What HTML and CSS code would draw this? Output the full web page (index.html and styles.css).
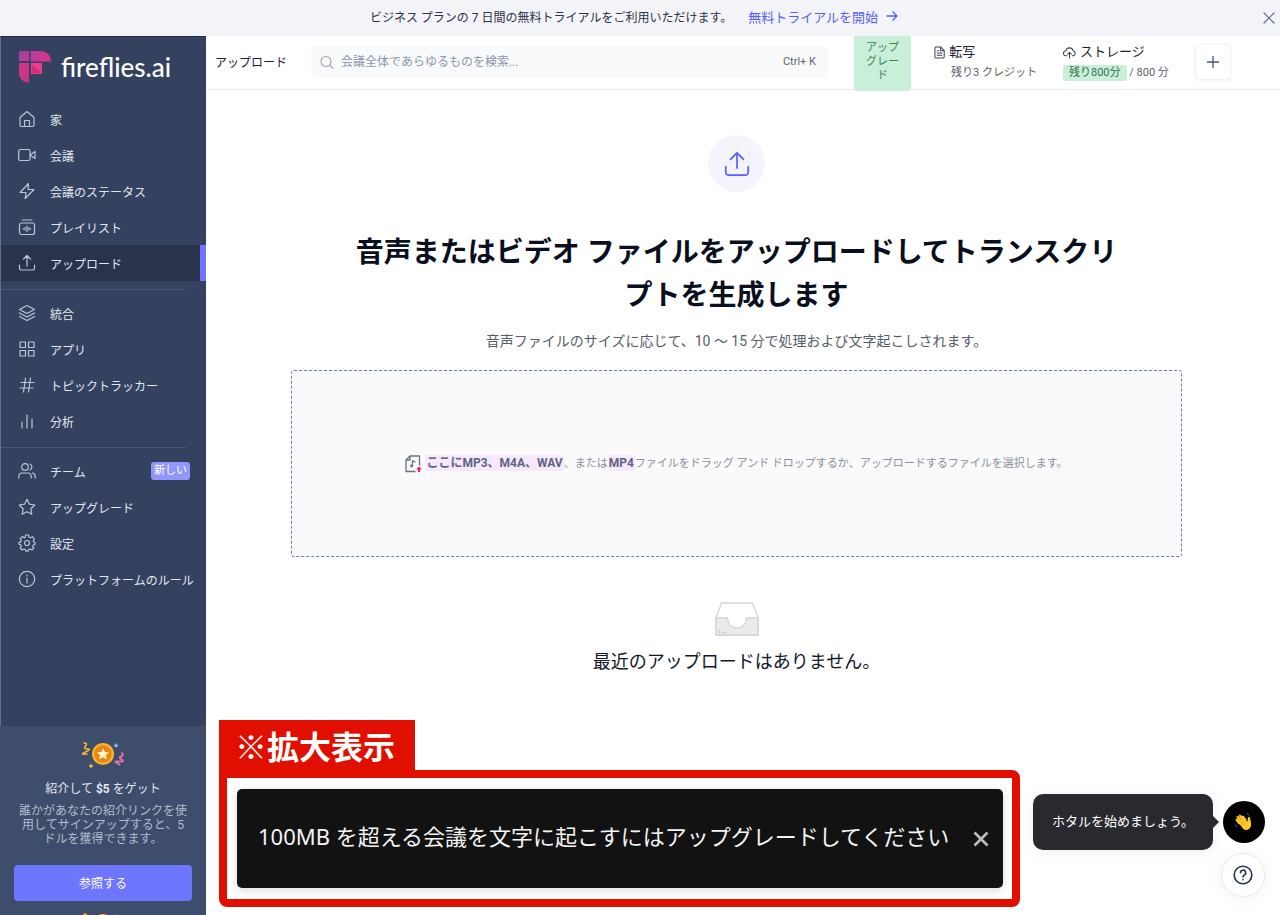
FILE: index.html
```html
<!DOCTYPE html>
<html lang="ja">
<head>
<meta charset="utf-8">
<meta name="viewport" content="width=device-width, initial-scale=1">
<title>アップロード - fireflies.ai</title>
<link rel="stylesheet" href="styles.css">
</head>
<body>
<div class="banner">
  <span>ビジネス プランの 7 日間の無料トライアルをご利用いただけます。</span>
  <a class="banner-link" href="#">無料トライアルを開始
    <svg class="banner-arrow" viewBox="0 0 12 12"><path d="M1 6h10M7 2l4 4-4 4"/></svg></a>
  <button class="banner-close" aria-label="閉じる"><svg viewBox="0 0 12 12"><path d="M1 1l10 10M11 1L1 11"/></svg></button>
</div>
<div class="app">
  <aside class="sidebar">
    <div class="nav-area">
      <a class="logo" href="#">
        <svg class="logo-mark" viewBox="0 0 32 32" aria-hidden="true">
          <defs>
            <linearGradient id="g" x1="0" y1="0" x2="1" y2="1"><stop offset="0" stop-color="#9b3fa8"/><stop offset=".5" stop-color="#b03c9c"/><stop offset="1" stop-color="#c8388f"/></linearGradient>
            <linearGradient id="h" x1="0" y1="0" x2="1" y2="0"><stop offset="0" stop-color="#b8409f"/><stop offset="1" stop-color="#dd2f86"/></linearGradient>
          </defs>
          <path fill="url(#g)" d="M0 0h10v10H0z"/>
          <path fill="url(#h)" d="M11.500 0H22a10 10 0 0 1 10 10v.5H11.500z"/>
          <path fill="#c93688" d="M0 12h10v20A10 10 0 0 1 0 22z"/>
          <path fill="#f03a8b" d="M12 12h11v11H12z"/>
          <path fill="#d32c78" d="M13 14l9 8h-9z"/>
        </svg>
        <span class="logo-text">fireflies.ai</span>
      </a>
      <nav>
        <ul class="nav-group">
          <li><a href="#"><svg viewBox="0 0 18 18"><path d="M2 7.500L9 1.500l7 6V15a1.500 1.500 0 0 1-1.500 1.500h-11A1.500 1.500 0 0 1 2 15zM6.500 16.500v-6h5v6"/></svg>家</a></li>
          <li><a href="#"><svg viewBox="0 0 18 18"><rect x=".7" y="3.500" width="11.300" height="11" rx="1.500"/><path d="M12 9l5-3.500v7z"/></svg>会議</a></li>
          <li><a href="#"><svg viewBox="0 0 18 18"><path d="M10.500 1.500L2 10.500h6l-.8 6L16 7.500h-6z"/></svg>会議のステータス</a></li>
          <li><a href="#"><svg viewBox="0 0 18 18"><rect x="1.500" y="5" width="15" height="11.500" rx="2"/><path d="M4 2h10M9 8v5.500M7 9.500v2.500M11 9.500v2.500M5.500 10.500v.5M12.500 10.500v.5"/></svg>プレイリスト</a></li>
          <li><a class="active" href="#" aria-current="page"><svg viewBox="0 0 18 18"><path d="M9 12V2M5.500 5L9 1.500 12.500 5M1.500 11v3.500a1.500 1.500 0 0 0 1.500 1.500h12a1.500 1.500 0 0 0 1.500-1.500V11"/></svg>アップロード</a></li>
        </ul>
        <ul class="nav-group">
          <li><a href="#"><svg viewBox="0 0 18 18"><path d="M9 1.500l7.500 4L9 9.500l-7.500-4zM1.500 9L9 13l7.500-4M1.500 12.500l7.500 4 7.500-4"/></svg>統合</a></li>
          <li><a href="#"><svg viewBox="0 0 18 18"><path d="M2 2h5.500v5.500H2zM10.500 2H16v5.500h-5.500zM2 10.500h5.500V16H2zM10.500 10.500H16V16h-5.500z"/></svg>アプリ</a></li>
          <li><a href="#"><svg viewBox="0 0 18 18"><path d="M3 6.500h13M2 12h13M7.500 2L5.500 16M12.500 2l-2 14"/></svg>トピックトラッカー</a></li>
          <li><a href="#"><svg viewBox="0 0 18 18"><path d="M4 10v6M9 3v13M14 7v9"/></svg>分析</a></li>
        </ul>
        <ul class="nav-group">
          <li><a href="#"><svg viewBox="0 0 18 18"><circle cx="7" cy="5" r="3.300"/><path d="M.8 16v-1.500A3.500 3.500 0 0 1 4.300 11h5.400a3.500 3.500 0 0 1 3.500 3.500V16M12 2a3.300 3.300 0 0 1 0 6M14.500 11a3.500 3.500 0 0 1 2.700 3.500V16"/></svg>チーム<span class="tag">新しい</span></a></li>
          <li><a href="#"><svg viewBox="0 0 18 18"><path d="M9 1.300l2.400 4.900 5.400.8-3.900 3.800.9 5.400L9 13.700l-4.800 2.500.9-5.400L1.200 7l5.400-.8z"/></svg>アップグレード</a></li>
          <li><a href="#"><svg viewBox="0 0 18 18"><circle cx="9" cy="9" r="2.500"/><path d="M7.500 1h3l.6 2.200 1.200.6 2-1.100 2 2-1.100 2 .6 1.200L17 8.500v2l-1.700.5-.6 1.200 1 1.900-1.900 1.900-2-1-1.200.5-.6 1.700H8l-.7-1.700-1.200-.5-2 1L2.300 14l1-1.900-.6-1.200L1 10.300v-2l1.800-.5.5-1.200-1-2 2-2 1.900 1.200 1.100-.6z"/></svg>設定</a></li>
          <li><a href="#"><svg viewBox="0 0 18 18"><circle cx="9" cy="9" r="7.700"/><path d="M9 8v5M9 5.200v.8"/></svg>プラットフォームのルール</a></li>
        </ul>
      </nav>
    </div>
    <section class="referral">
      <svg class="coin" viewBox="0 0 44 28" aria-hidden="true">
        <g id="coin"><circle cx="22" cy="14" r="11" fill="#f9b42d"/><circle cx="22" cy="14" r="8.700" fill="#e8850f"/>
        <path d="M22 8l1.800 4 4.300.4-3.200 2.900 1 4.200-3.900-2.200-3.800 2.200.9-4.200-3.200-2.900 4.400-.4z" fill="#fff3cf"/>
        <path d="M3 3q4 0 1.500 3t2 3-2 3 1.500 2" fill="none" stroke="#f9b42d" stroke-width="1.600"/>
        <path d="M41 13q2 3-1 3.500t.5 3-3 2 1 3" fill="none" stroke="#e873b5" stroke-width="1.800"/>
        <path d="M35 3l1 1.500 1.500 1-1.500 1-1 1.500-1-1.500-1.500-1 1.500-1z" fill="#7fbdf0"/>
        <path d="M10 23.500l1 1.500 1.500 1-1.500 1-1 1.500L9 27l-1.500-1L9 25z" fill="#f9b42d"/></g>
      </svg>
      <h2 class="referral-title">紹介して <b>$5</b> をゲット</h2>
      <p class="referral-text">誰かがあなたの紹介リンクを使用してサインアップすると、5 ドルを獲得できます。</p>
      <button class="referral-button">参照する</button>
      <div class="next-card"><svg class="coin" viewBox="0 0 44 28" aria-hidden="true"><use href="#coin"/></svg></div>
    </section>
  </aside>

  <main class="main">
    <header class="topbar">
      <h2 class="page-title">アップロード</h2>
      <label class="search">
        <svg viewBox="0 0 14 14"><circle cx="6" cy="6.500" r="5"/><path d="M9.700 10.200L13 13.300"/></svg>
        <input type="search" placeholder="会議全体であらゆるものを検索..." aria-label="検索">
        <span class="shortcut">Ctrl+ K</span>
      </label>
      <button class="upgrade">アップグレード</button>
      <div class="stat transcript">
        <div class="stat-name"><svg viewBox="0 0 12 14"><path d="M1 2.500A1.500 1.500 0 0 1 2.500 1H7l4 4v6.500a1.500 1.500 0 0 1-1.500 1.500h-7A1.500 1.500 0 0 1 1 11.500zM7 1v4h4M3.500 7.500h5M3.500 10h5M3.500 5h1.500"/></svg>転写</div>
        <div class="stat-value">残り3 クレジット</div>
      </div>
      <div class="stat storage">
        <div class="stat-name"><svg viewBox="0 0 14 14"><path d="M4 10.500H3.200A2.600 2.600 0 0 1 3 5.300 4 4 0 0 1 10.800 5a2.800 2.800 0 0 1 .2 5.500h-1M7 13V7M5 8.800L7 6.800l2 2"/></svg>ストレージ</div>
        <div class="stat-value"><span class="left">残り800分</span> / 800 分</div>
      </div>
      <button class="add" aria-label="追加"><svg viewBox="0 0 12 12"><path d="M6 0v12M0 6h12"/></svg></button>
    </header>
    <div class="content">
      <div class="upload-badge"><svg viewBox="0 0 26 26"><path d="M13 17V2M6.500 8.300L13 1.800l6.500 6.500M1.800 15.500v6a2.700 2.700 0 0 0 2.700 2.700h17a2.700 2.700 0 0 0 2.700-2.700v-6"/></svg></div>
      <h1 class="headline">音声またはビデオ ファイルをアップロードしてトランスクリプトを生成します</h1>
      <p class="subline">音声ファイルのサイズに応じて、10 ～ 15 分で処理および文字起こしされます。</p>
      <label class="dropzone">
        <input class="file-input" type="file">
        <svg class="file-icon" viewBox="0 0 17 18"><path d="M14.500 10V1H5L1 5v11.500h9M5 1v4H1" fill="none" stroke="#6b7186" stroke-width="1.300"/><path d="M7.500 11V5.500l2.500 1.500" fill="none" stroke="#6b7186" stroke-width="1.200"/><circle cx="6.500" cy="11" r="1.400" fill="#6b7186"/><path d="M14 11.500l3 3h-2V17h-2v-2.500h-2z" fill="#ee1f72"/></svg>
        <span class="drop-text"><strong>ここにMP3、M4A、WAV</strong>、または<strong>MP4</strong>ファイルをドラッグ アンド ドロップするか、アップロードするファイルを選択します。</span>
      </label>
      <svg class="inbox" viewBox="0 0 44 34" aria-hidden="true"><path d="M6.500 1h31L43 16H1z" fill="#fff"/><path d="M6.500 1h31L43 16v17H1V16z" fill="none" stroke="#d4d4d6" stroke-width="1.300"/><path d="M1 16h11.500c0 6 4 10 9.500 10s9.500-4 9.500-10H43v17H1z" fill="#ebebec" stroke="#d4d4d6" stroke-width="1.300"/><path d="M4 28v2.500h1.500M8 30.500h2" fill="none" stroke="#c3c3c6"/></svg>
      <p class="empty">最近のアップロードはありません。</p>
    </div>
  </main>
</div>

<section class="callout">
  <div class="callout-label">※拡大表示</div>
  <div class="callout-frame">
    <div class="toast" role="status">
      <span class="toast-text">100MB を超える会議を文字に起こすにはアップグレードしてください</span>
      <button class="toast-close" aria-label="閉じる"><svg viewBox="0 0 16 16"><path d="M1.500 1.500l13 13M14.500 1.500l-13 13"/></svg></button>
    </div>
  </div>
</section>

<div class="helper">
  <div class="helper-row">
    <div class="tip">ホタルを始めましょう。</div>
    <button class="wave" aria-label="始める"><svg viewBox="0 0 20 20"><path d="M5.300 11.200L2.600 7.800M7 9.500L3.600 5M9 8.200L6 3.800M11.300 7.800L8.800 4.600" fill="none" stroke="#ffc928" stroke-width="2.300" stroke-linecap="round"/><path d="M4.200 10.200l6-4.200 3.300 3.500c.5-1.500 0-3 .6-4.300 1.400-.9 2.200.6 2.300 2.500.3 2.600 1.300 4.600.2 7.300-1.400 3-4.800 3.800-7.300 1.900z" fill="#ffc928"/><path d="M6.300 9.700l3 3.500M8.200 8.300l3 3.500M10.200 7.200l2.500 3" stroke="#e59a12" stroke-width=".7" fill="none"/><path d="M1.500 12.500l1.500 2.500M13 1.500l2 1.500" stroke="#2f6fb5" stroke-width="1"/></svg></button>
  </div>
  <button class="help" aria-label="ヘルプ"><svg viewBox="0 0 20 20"><circle cx="10" cy="10" r="8.800"/><path d="M7.500 7.800a2.600 2.600 0 1 1 3.800 2.300c-.9.500-1.300.9-1.300 1.800M10 14.500v.3"/></svg></button>
</div>
</body>
</html>
```
FILE: styles.css
```css
* { box-sizing: border-box; }

body {
  margin: 0;
  height: 100vh;
  display: flex;
  flex-direction: column;
  position: relative;
  overflow: hidden;
  background: #fff;
  color: #23283a;
  font-family: Roboto, "Noto Sans CJK JP", sans-serif;
  font-size: 12px;
}

h1, h2, p, ul { margin: 0; padding: 0; }
ul { list-style: none; }
a { color: inherit; text-decoration: none; }
button { font: inherit; border: 0; padding: 0; cursor: pointer; }
svg { display: block; flex: none; fill: none; stroke-linecap: round; stroke-linejoin: round; }

/* Trial banner */
.banner {
  flex: none;
  height: 36px;
  display: flex;
  align-items: center;
  justify-content: center;
  gap: 16px;
  padding: 0 12px 4px 0;
  position: relative;
  background: #f2f4f8;
  color: #2c3244;
}
.banner-link { display: flex; align-items: center; gap: 8px; font-size: 13px; color: #5b5ef5; }
.banner-arrow { width: 12px; height: 12px; stroke: #5b5ef5; stroke-width: 1.4; }
.banner-close { position: absolute; right: 5px; top: 12px; background: none; }
.banner-close svg { width: 12px; height: 12px; stroke: #64708a; stroke-width: 1.2; }

.app { flex: 1; min-height: 0; display: grid; grid-template-columns: 206px 1fr; }

/* Sidebar */
.sidebar {
  display: flex;
  flex-direction: column;
  min-height: 0;
  background: #34415f;
  color: #e2e7ef;
}
.nav-area { flex: 1; border-left: 1px solid #64708a; border-top: 1px solid #1f2d4e; }
.logo { display: flex; align-items: center; gap: 10px; padding: 14px 0 18px 18px; }
.logo-mark { width: 32px; height: 32px; }
.logo-text { font-family: Lato, sans-serif; font-size: 26px; line-height: 32px; font-weight: 500; color: #fff; }
.nav-group + .nav-group { margin-top: 8px; padding-top: 6px; position: relative; }
.nav-group + .nav-group::before {
  content: "";
  position: absolute;
  top: 0;
  left: 0;
  right: 20px;
  border-top: 1px solid #4b5875;
}
.nav-group a { display: flex; align-items: center; gap: 14px; height: 36px; padding-left: 17px; }
.nav-group svg { width: 18px; height: 18px; stroke: #bcc6d6; stroke-width: 1.2; }
.nav-group a.active { background: #29344c; border-right: 6px solid #6f75ff; }
.tag {
  margin-left: auto;
  margin-right: 16px;
  padding: 0 3px;
  border-radius: 3px;
  background: #9295fb;
  color: #fff;
  font-size: 11px;
  line-height: 18px;
}

.referral {
  flex: none;
  display: flex;
  flex-direction: column;
  align-items: center;
  padding: 14px 14px 0;
  background: #3e4d6b;
  text-align: center;
}
.coin { width: 44px; height: 28px; }
.referral-title { margin-top: 12px; font-size: 12px; line-height: 18px; font-weight: 400; }
.referral-text { margin-top: 6px; padding: 0 3px; line-height: 14px; color: #b3bccc; }
.referral-button {
  align-self: stretch;
  height: 36px;
  margin-top: 19px;
  padding-bottom: 2px;
  border-radius: 4px;
  background: #6e75ff;
  color: #fff;
}
.next-card { height: 14px; padding-top: 10px; overflow: hidden; }

/* Top bar */
.main { min-width: 0; }
.topbar {
  display: flex;
  align-items: center;
  height: 54px;
  padding: 0 49px 2px 9px;
  border-bottom: 1px solid #ebecee;
}
.page-title { margin-right: 24px; font-size: 12px; font-weight: 400; color: #1c2130; white-space: nowrap; }
.search {
  flex: 1;
  min-width: 0;
  display: flex;
  align-items: center;
  gap: 7px;
  height: 32px;
  padding: 0 12px 0 9px;
  border-radius: 4px;
  background: #f9fafc;
}
.search svg { width: 14px; height: 14px; stroke: #a0a5ae; stroke-width: 1.1; }
.search input {
  flex: 1;
  min-width: 0;
  border: 0;
  padding: 0;
  outline: 0;
  background: none;
  font: inherit;
}
.search input::placeholder { color: #8a97aa; opacity: 1; }
.shortcut { font-size: 11px; color: #5f6672; }
.upgrade {
  align-self: flex-start;
  flex: none;
  width: 57px;
  height: 55px;
  margin: 0 23px 0 26px;
  padding: 0 12px 4px;
  border-radius: 0 0 3px 3px;
  background: #c9efd9;
  color: #418160;
  font-size: 11px;
  line-height: 14px;
  word-break: break-all;
}
.stat { flex: none; white-space: nowrap; }
.stat-name { display: flex; align-items: center; gap: 4px; font-size: 13px; line-height: 20px; color: #1c2130; }
.stat-name svg { height: 13px; stroke: #3c4254; stroke-width: 1.1; }
.stat-value { font-size: 11px; line-height: 16px; margin-top: 3px; color: #596070; }
.transcript { width: 104px; }
.transcript .stat-value { padding-left: 17px; }
.storage { width: 108px; margin: 0 24px 0 25px; }
.left { display: inline-block; padding: 0 6px; border-radius: 2px; background: #c9efd9; color: #36734f; }
.add {
  flex: none;
  display: grid;
  place-items: center;
  width: 36px;
  height: 36px;
  border-radius: 4px;
  background: #fff;
  border: 1px solid #f1f2f4;
  box-shadow: 0 1px 3px #0000000f;
}
.add svg { width: 12px; height: 12px; stroke: #4e586c; stroke-width: 1.3; }

/* Upload area */
.content {
  display: flex;
  flex-direction: column;
  align-items: center;
  padding: 45px 98px 0 85px;
  text-align: center;
}
.upload-badge {
  display: grid;
  place-items: center;
  width: 57px;
  height: 57px;
  border-radius: 50%;
  background: #f4f4ff;
}
.upload-badge svg { width: 26px; height: 26px; stroke: #5a5dff; stroke-width: 1.7; }
.headline {
  margin-top: 39px;
  padding: 0 56px;
  color: #0a0f20;
  font-size: 28px;
  line-height: 43px;
  font-weight: 700;
}
.subline { margin-top: 14px; font-size: 14px; line-height: 20px; color: #565c68; }
.dropzone {
  align-self: stretch;
  display: flex;
  align-items: center;
  justify-content: center;
  gap: 3px;
  height: 187px;
  margin-top: 19px;
  border: 1px dashed #6c70ff;
  border-radius: 3px;
  background: #fafafa;
  color: #8a909d;
  font-size: 11px;
  line-height: 18px;
  position: relative;
}
.file-input { position: absolute; width: 1px; height: 1px; opacity: 0; }
.file-icon { width: 17px; height: 18px; }
.drop-text strong {
  padding: 1px;
  border-radius: 3px;
  background: #f7e8fc;
  color: #5f6480;
  font-size: 12px;
  font-weight: 700;
}
.inbox { width: 44px; height: 34px; margin-top: 45px; }
.empty { margin-top: 12px; font-size: 18px; line-height: 28px; color: #12172a; }

/* Enlarged notice */
.callout { position: absolute; left: 219px; right: 260px; bottom: 8px; }
.callout-label {
  width: fit-content;
  padding: 0 20px 0 16px;
  background: #e00f00;
  color: #fff;
  font-family: "Noto Sans CJK JP", sans-serif;
  font-size: 32px;
  line-height: 50px;
  font-weight: 700;
}
.callout-frame { padding: 11px 9px 11px 10px; border: 8px solid #e00f00; border-radius: 0 8px 8px 8px; background: #fff; }
.toast {
  display: flex;
  align-items: center;
  justify-content: space-between;
  height: 99px;
  padding: 0 14px 0 21px;
  border-radius: 5px;
  background: #121212;
  box-shadow: 0 2px 10px #00000026;
  color: #f4f4f4;
  font-family: "Noto Sans", "Noto Sans CJK JP", sans-serif;
  font-size: 22px;
  white-space: nowrap;
}
.toast-text { padding-bottom: 8px; }
.toast-close { background: none; }
.toast-close svg { width: 16px; height: 16px; stroke: #bcbcbc; stroke-width: 2.6; stroke-linecap: butt; }

/* Assistant bubble */
.helper {
  position: absolute;
  right: 15px;
  bottom: 18px;
  display: flex;
  flex-direction: column;
  align-items: flex-end;
  gap: 3px;
}
.helper-row { display: flex; align-items: center; gap: 10px; }
.tip {
  width: 180px;
  padding: 18px 0;
  position: relative;
  border-radius: 10px;
  background: #292a30;
  box-shadow: 0 2px 20px #0000000f;
  color: #fff;
  font-size: 13px;
  line-height: 20px;
  text-align: center;
}
.tip::after {
  content: "";
  position: absolute;
  left: 100%;
  top: 50%;
  margin-top: -6px;
  border: 6px solid transparent;
  border-left-color: #292a30;
}
.wave, .help { display: grid; place-items: center; border-radius: 50%; }
.wave { width: 42px; height: 42px; background: #000; }
.wave svg { width: 20px; height: 20px; }
.help {
  width: 44px;
  height: 44px;
  background: #fff;
  border: 1px solid #e9eaec;
  box-shadow: 0 2px 16px #0000000f;
}
.help svg { width: 20px; height: 20px; stroke: #22304f; stroke-width: 1.6; }
```
